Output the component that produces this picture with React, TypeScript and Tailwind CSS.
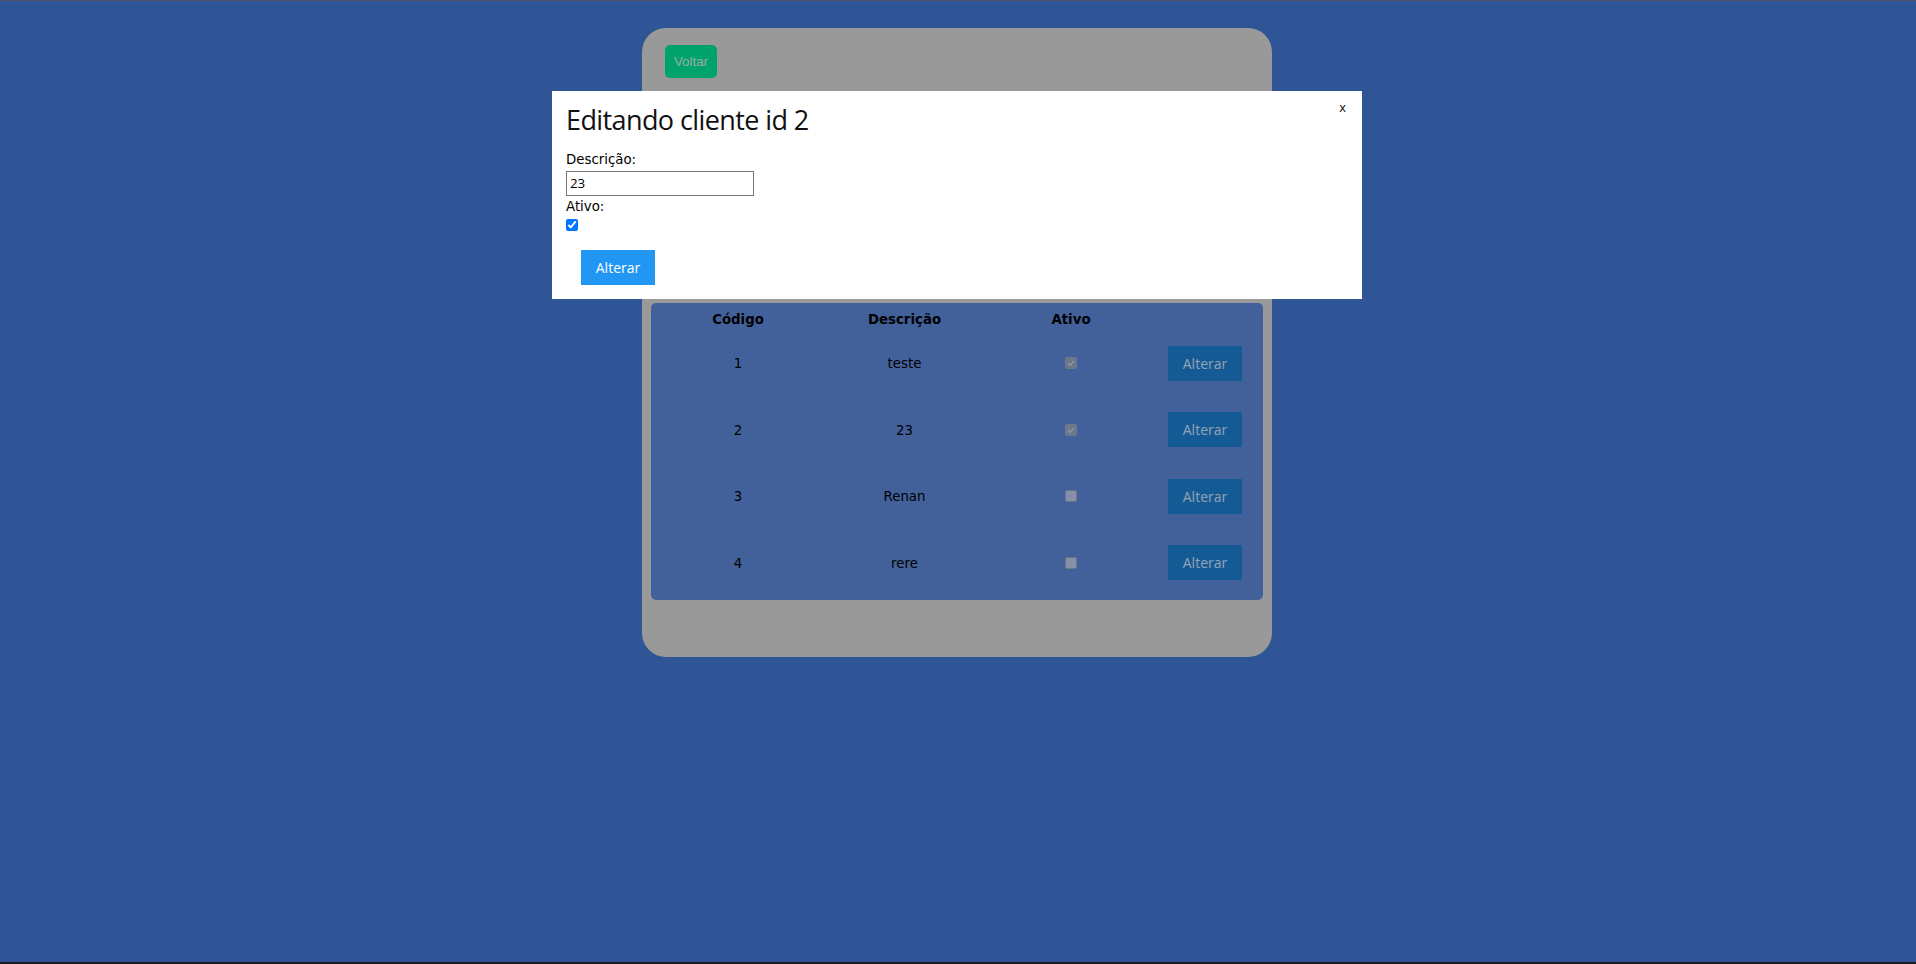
import { useState } from "react";

type Cliente = { id: number; descricao: string; ativo: boolean };

const clientes: Cliente[] = [
  { id: 1, descricao: "teste", ativo: true },
  { id: 2, descricao: "23", ativo: true },
  { id: 3, descricao: "Renan", ativo: false },
  { id: 4, descricao: "rere", ativo: false },
];

function MiniCheck({ checked }: { checked: boolean }) {
  // disabled checkbox, seen through the dark backdrop
  return checked ? (
    <span className="flex h-[12px] w-[12px] items-center justify-center rounded-[2px] bg-[#6d778c]">
      <svg viewBox="0 0 12 12" className="h-[10px] w-[10px]">
        <path d="M2.5 6.2 L5 8.6 L9.6 3.4" fill="none" stroke="#8e98ab" strokeWidth="1.6" />
      </svg>
    </span>
  ) : (
    <span className="block h-[12px] w-[12px] rounded-[2px] border border-[#6b7488] bg-[#8790a6]" />
  );
}

export default function App() {
  const [descricao, setDescricao] = useState("23");
  const [ativo, setAtivo] = useState(true);

  return (
    <div className="flex h-screen flex-col bg-[#2f5597] font-['DejaVu_Sans',sans-serif] text-[13.33px] text-black">
      <div className="h-[1px] bg-[#4d5566]" />

      <div className="flex-1 pr-[2px]">
        {/* main card (dimmed by the modal backdrop) */}
        <div className="mx-auto mt-[27px] w-[630px] rounded-[24px] bg-[#999999] p-[9px] pb-[57px]">
          <button className="ml-[14px] mt-[8px] h-[33px] w-[52px] rounded-[5px] bg-[#00a36c] font-['Liberation_Sans',sans-serif] text-[13.33px] text-[#9aaba3]">
            Voltar
          </button>

          <div className="mt-[225px] rounded-[5px] bg-[#42609a] pb-[4px] pl-[4px] pr-[7px] pt-[6px]">
            <div className="grid h-[21px] grid-cols-[166px_167px_166px_1fr] items-center text-center font-bold">
              <span>Código</span>
              <span>Descrição</span>
              <span>Ativo</span>
              <span />
            </div>
            {clientes.map((c) => (
              <div
                key={c.id}
                className="grid h-[66.5px] grid-cols-[166px_167px_166px_1fr] items-center text-center"
              >
                <span className="pt-[2px]">{c.id}</span>
                <span className="pt-[2px]">{c.descricao}</span>
                <span className="flex justify-center">
                  <MiniCheck checked={c.ativo} />
                </span>
                <span className="flex justify-center">
                  <button className="h-[35px] w-[74px] bg-[#145b96] font-['Open_Sans',sans-serif] text-[14px] text-[#94a3b5]">
                    Alterar
                  </button>
                </span>
              </div>
            ))}
          </div>
        </div>
      </div>

      <div className="h-[2px] bg-[#1c1c26]" />

      {/* edit modal */}
      <div className="fixed left-0 right-[2px] top-[91px] mx-auto h-[208px] w-[810px] bg-white pl-[14px] pt-[10px]">
        <button className="absolute right-[16px] top-[10px] font-['DejaVu_Sans',sans-serif] text-[12px] leading-[15px] text-[#222]">
          x
        </button>
        <h2 className="font-['Open_Sans',sans-serif] text-[27px] leading-[38px] tracking-[-0.6px] text-[#111]">
          Editando cliente id 2
        </h2>
        <div className="mt-[13px] leading-[15.5px]">Descrição:</div>
        <input
          value={descricao}
          onChange={(e) => setDescricao(e.target.value)}
          className="mt-[3px] block h-[25px] w-[188px] border border-[#767676] px-[3px] font-['Open_Sans',sans-serif] text-[13.33px] outline-none"
        />
        <div className="mt-[3px] leading-[15.5px]">Ativo:</div>
        <input
          type="checkbox"
          checked={ativo}
          onChange={(e) => setAtivo(e.target.checked)}
          className="m-0 mt-[5px] block h-[12px] w-[12px]"
        />
        <button className="ml-[15px] mt-[19px] h-[35px] w-[74px] bg-[#2196f3] font-['Open_Sans',sans-serif] text-[14px] text-white">
          Alterar
        </button>
      </div>
    </div>
  );
}
